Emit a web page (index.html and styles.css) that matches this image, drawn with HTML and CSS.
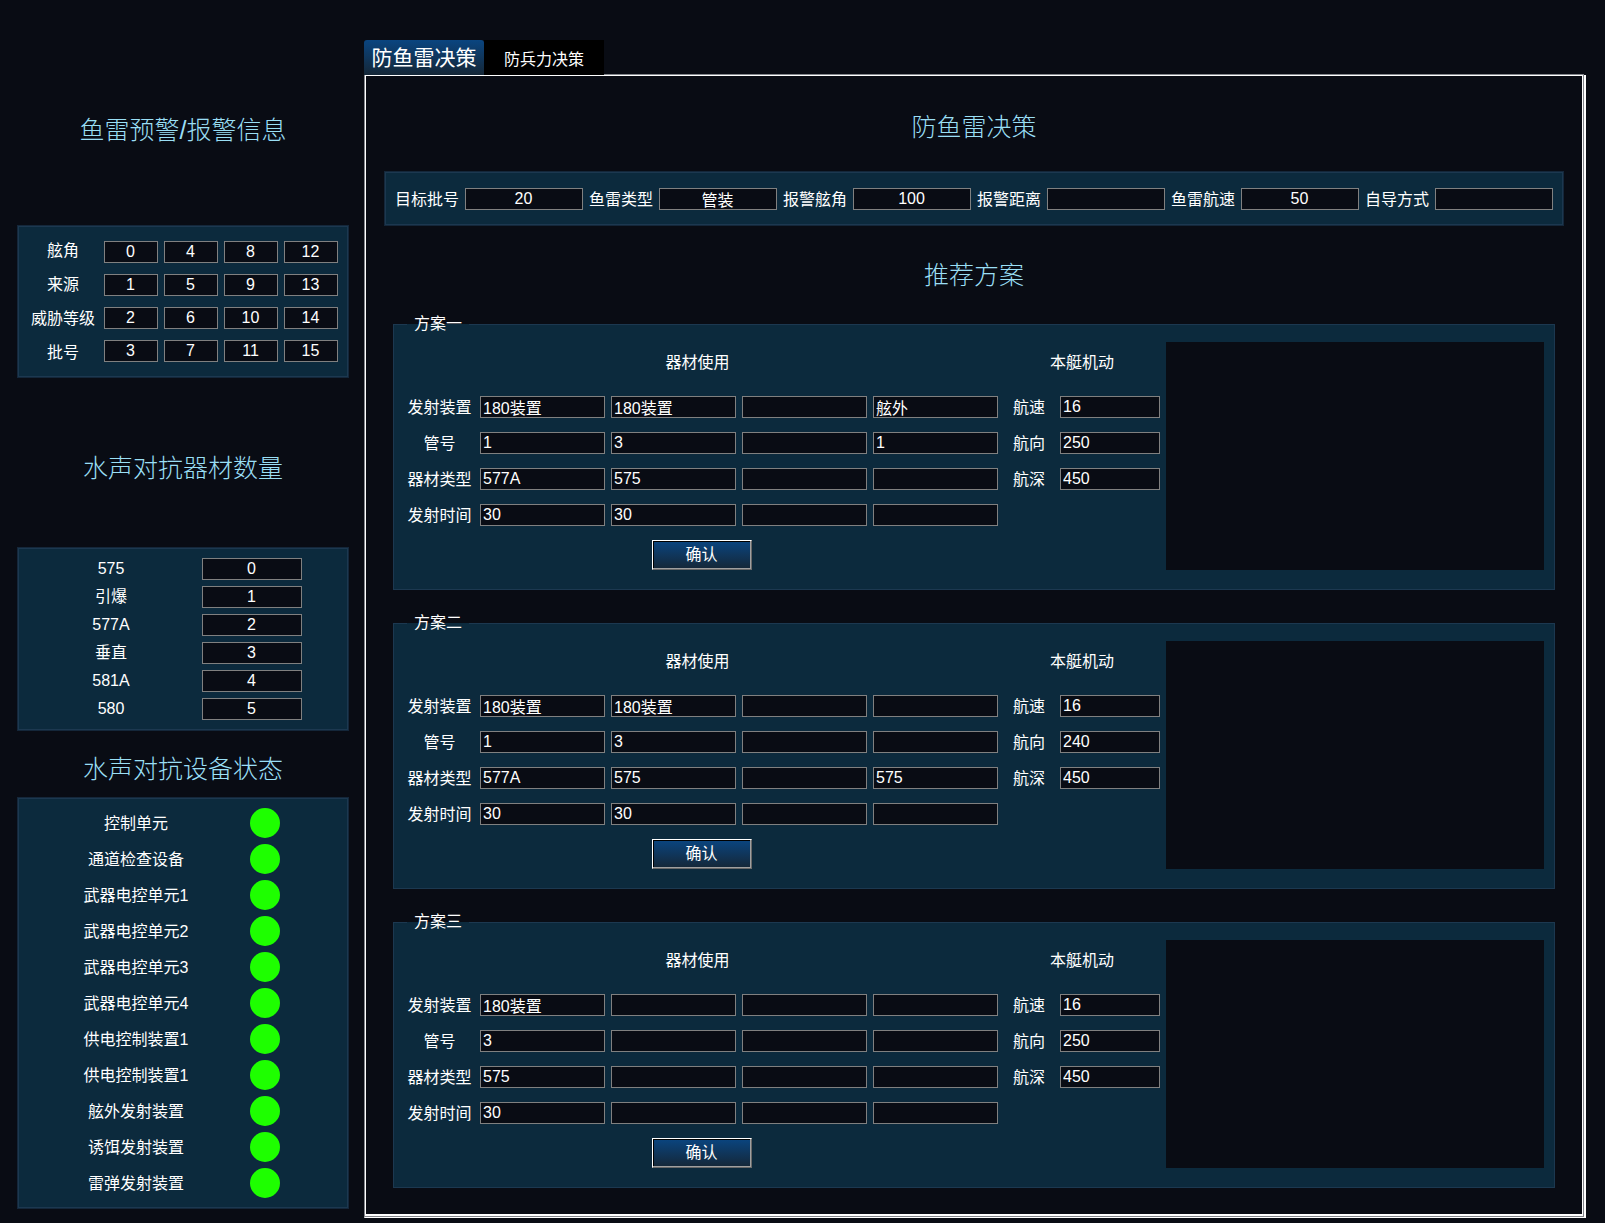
FILE: index.html
```html
<!DOCTYPE html>
<html lang="zh-CN">
<head>
<meta charset="utf-8">
<title>防鱼雷决策</title>
<link rel="stylesheet" href="styles.css">
</head>
<body>
<div class="app">
  <aside class="sidebar">
    <h2 class="title title-warning">鱼雷预警/报警信息</h2>
    <section class="panel warning">
      <div class="warning-labels">
        <label for="w0">舷角</label>
        <label for="w1">来源</label>
        <label for="w2">威胁等级</label>
        <label for="w3">批号</label>
      </div>
      <div class="warning-fields">
        <input id="w0" class="field center" value="0">
        <input id="w1" class="field center" value="1">
        <input id="w2" class="field center" value="2">
        <input id="w3" class="field center" value="3">
        <input class="field center" aria-label="舷角" value="4">
        <input class="field center" aria-label="来源" value="5">
        <input class="field center" aria-label="威胁等级" value="6">
        <input class="field center" aria-label="批号" value="7">
        <input class="field center" aria-label="舷角" value="8">
        <input class="field center" aria-label="来源" value="9">
        <input class="field center" aria-label="威胁等级" value="10">
        <input class="field center" aria-label="批号" value="11">
        <input class="field center" aria-label="舷角" value="12">
        <input class="field center" aria-label="来源" value="13">
        <input class="field center" aria-label="威胁等级" value="14">
        <input class="field center" aria-label="批号" value="15">
      </div>
    </section>

    <h2 class="title title-stock">水声对抗器材数量</h2>
    <section class="panel stock">
      <label for="s0">575</label><input id="s0" class="field center" value="0">
      <label for="s1">引爆</label><input id="s1" class="field center" value="1">
      <label for="s2">577A</label><input id="s2" class="field center" value="2">
      <label for="s3">垂直</label><input id="s3" class="field center" value="3">
      <label for="s4">581A</label><input id="s4" class="field center" value="4">
      <label for="s5">580</label><input id="s5" class="field center" value="5">
    </section>

    <h2 class="title title-status">水声对抗设备状态</h2>
    <ul class="panel status">
      <li><span class="device">控制单元</span><i class="lamp"></i></li>
      <li><span class="device">通道检查设备</span><i class="lamp"></i></li>
      <li><span class="device">武器电控单元1</span><i class="lamp"></i></li>
      <li><span class="device">武器电控单元2</span><i class="lamp"></i></li>
      <li><span class="device">武器电控单元3</span><i class="lamp"></i></li>
      <li><span class="device">武器电控单元4</span><i class="lamp"></i></li>
      <li><span class="device">供电控制装置1</span><i class="lamp"></i></li>
      <li><span class="device">供电控制装置1</span><i class="lamp"></i></li>
      <li><span class="device">舷外发射装置</span><i class="lamp"></i></li>
      <li><span class="device">诱饵发射装置</span><i class="lamp"></i></li>
      <li><span class="device">雷弹发射装置</span><i class="lamp"></i></li>
    </ul>
  </aside>

  <main class="main">
    <div class="tabs" role="tablist">
      <button class="tab active" role="tab" aria-selected="true">防鱼雷决策</button>
      <button class="tab" role="tab" aria-selected="false">防兵力决策</button>
    </div>
    <div class="pane" role="tabpanel">
      <div class="pane-body">
        <h1 class="title title-decision">防鱼雷决策</h1>
        <section class="panel target">
          <label for="t0">目标批号</label><input id="t0" class="field center" value="20">
          <label for="t1">鱼雷类型</label><input id="t1" class="field center" value="管装">
          <label for="t2">报警舷角</label><input id="t2" class="field center" value="100">
          <label for="t3">报警距离</label><input id="t3" class="field center" value="">
          <label for="t4">鱼雷航速</label><input id="t4" class="field center" value="50">
          <label for="t5">自导方式</label><input id="t5" class="field center" value="">
        </section>

        <h2 class="title title-plans">推荐方案</h2>
        <div class="plans">
          <fieldset class="plan">
            <legend>方案一</legend>
            <div class="plan-grid">
              <h3 class="equip-head">器材使用</h3>
              <h3 class="nav-head">本艇机动</h3>
              <div class="canvas"></div>
              <label for="a1">发射装置</label>
              <input id="a1" class="field" value="180装置">
              <input class="field" aria-label="发射装置" value="180装置">
              <input class="field" aria-label="发射装置" value="">
              <input class="field" aria-label="发射装置" value="舷外">
              <label for="a5">航速</label><input id="a5" class="field" value="16">
              <label for="a2">管号</label>
              <input id="a2" class="field" value="1">
              <input class="field" aria-label="管号" value="3">
              <input class="field" aria-label="管号" value="">
              <input class="field" aria-label="管号" value="1">
              <label for="a6">航向</label><input id="a6" class="field" value="250">
              <label for="a3">器材类型</label>
              <input id="a3" class="field" value="577A">
              <input class="field" aria-label="器材类型" value="575">
              <input class="field" aria-label="器材类型" value="">
              <input class="field" aria-label="器材类型" value="">
              <label for="a7">航深</label><input id="a7" class="field" value="450">
              <label for="a4">发射时间</label>
              <input id="a4" class="field" value="30">
              <input class="field" aria-label="发射时间" value="30">
              <input class="field" aria-label="发射时间" value="">
              <input class="field" aria-label="发射时间" value="">
              <button class="confirm" type="button">确认</button>
            </div>
          </fieldset>

          <fieldset class="plan">
            <legend>方案二</legend>
            <div class="plan-grid">
              <h3 class="equip-head">器材使用</h3>
              <h3 class="nav-head">本艇机动</h3>
              <div class="canvas"></div>
              <label for="b1">发射装置</label>
              <input id="b1" class="field" value="180装置">
              <input class="field" aria-label="发射装置" value="180装置">
              <input class="field" aria-label="发射装置" value="">
              <input class="field" aria-label="发射装置" value="">
              <label for="b5">航速</label><input id="b5" class="field" value="16">
              <label for="b2">管号</label>
              <input id="b2" class="field" value="1">
              <input class="field" aria-label="管号" value="3">
              <input class="field" aria-label="管号" value="">
              <input class="field" aria-label="管号" value="">
              <label for="b6">航向</label><input id="b6" class="field" value="240">
              <label for="b3">器材类型</label>
              <input id="b3" class="field" value="577A">
              <input class="field" aria-label="器材类型" value="575">
              <input class="field" aria-label="器材类型" value="">
              <input class="field" aria-label="器材类型" value="575">
              <label for="b7">航深</label><input id="b7" class="field" value="450">
              <label for="b4">发射时间</label>
              <input id="b4" class="field" value="30">
              <input class="field" aria-label="发射时间" value="30">
              <input class="field" aria-label="发射时间" value="">
              <input class="field" aria-label="发射时间" value="">
              <button class="confirm" type="button">确认</button>
            </div>
          </fieldset>

          <fieldset class="plan">
            <legend>方案三</legend>
            <div class="plan-grid">
              <h3 class="equip-head">器材使用</h3>
              <h3 class="nav-head">本艇机动</h3>
              <div class="canvas"></div>
              <label for="c1">发射装置</label>
              <input id="c1" class="field" value="180装置">
              <input class="field" aria-label="发射装置" value="">
              <input class="field" aria-label="发射装置" value="">
              <input class="field" aria-label="发射装置" value="">
              <label for="c5">航速</label><input id="c5" class="field" value="16">
              <label for="c2">管号</label>
              <input id="c2" class="field" value="3">
              <input class="field" aria-label="管号" value="">
              <input class="field" aria-label="管号" value="">
              <input class="field" aria-label="管号" value="">
              <label for="c6">航向</label><input id="c6" class="field" value="250">
              <label for="c3">器材类型</label>
              <input id="c3" class="field" value="575">
              <input class="field" aria-label="器材类型" value="">
              <input class="field" aria-label="器材类型" value="">
              <input class="field" aria-label="器材类型" value="">
              <label for="c7">航深</label><input id="c7" class="field" value="450">
              <label for="c4">发射时间</label>
              <input id="c4" class="field" value="30">
              <input class="field" aria-label="发射时间" value="">
              <input class="field" aria-label="发射时间" value="">
              <input class="field" aria-label="发射时间" value="">
              <button class="confirm" type="button">确认</button>
            </div>
          </fieldset>
        </div>
      </div>
    </div>
  </main>
</div>
</body>
</html>
```

FILE: styles.css
```css
:root {
  --bg: #090c14;
  --panel: #0c2a3d;
  --edge: #1c3850;
  --edge-dark: #14273a;
  --title: #9adff5;
}

* {
  box-sizing: border-box;
}

body {
  margin: 0;
  background: var(--bg);
  color: #fff;
  font: 16px/20px "Liberation Sans", "Noto Sans CJK SC", sans-serif;
}

button,
input {
  font: inherit;
  color: inherit;
}

.app {
  display: flex;
  gap: 15px;
  min-height: 100vh;
  padding: 23px 19px 5px 17px;
}

.sidebar {
  flex: 0 0 332px;
}

.title {
  display: flex;
  align-items: center;
  justify-content: center;
  margin: 0;
  padding-top: 10px;
  color: var(--title);
  font-size: 25px;
  font-weight: 300;
  line-height: 32px;
}

.title-warning { height: 202px; padding-top: 12px; }
.title-stock { height: 169px; }
.title-status { height: 66px; }
.title-decision { height: 95px; padding-top: 6px; }
.title-plans { height: 88px; }

.panel {
  margin: 0;
  border: 1px solid var(--edge-dark);
  box-shadow: inset 0 0 0 1px var(--edge);
  background: var(--panel);
}

.field {
  width: 100%;
  min-width: 0;
  height: 22px;
  margin: 0;
  padding: 0 2px;
  border: 1px solid #808080;
  border-radius: 0;
  outline: none;
  background: var(--bg);
  line-height: 20px;
}

.center {
  padding-right: 3px;
  text-align: center;
}

/* Warning grid */
.warning {
  display: flex;
  gap: 6px;
  padding: 8px 10px 7px;
}

.warning-labels {
  flex: 1;
  text-align: center;
  white-space: nowrap;
}

.warning-labels label {
  display: block;
  line-height: 34px;
}

.warning-fields {
  display: grid;
  grid-template-columns: repeat(4, 54px);
  grid-template-rows: repeat(4, 22px);
  grid-auto-flow: column;
  gap: 11px 6px;
  padding-top: 7px;
}

/* Countermeasure stock */
.stock {
  display: grid;
  grid-template-columns: 152px 100px;
  gap: 6px 15px;
  padding: 10px 17px;
}

.stock label {
  line-height: 22px;
  text-align: center;
}

/* Device status */
.status {
  display: grid;
  gap: 6px;
  padding: 10px 68px;
  list-style: none;
}

.status li {
  display: flex;
  align-items: center;
  justify-content: space-between;
}

.device {
  display: flex;
  flex: 0 0 100px;
  justify-content: center;
  min-width: 0;
  padding-top: 2px;
  white-space: nowrap;
}

.lamp {
  width: 30px;
  height: 30px;
  border-radius: 50%;
  background: #1eff00;
}

/* Tabs and pane */
.main {
  display: flex;
  flex: 1;
  flex-direction: column;
  min-width: 0;
  padding-top: 17px;
}

.tabs {
  display: flex;
}

.tabs::after {
  content: "";
  flex: 1;
  margin-right: 2px;
  border-bottom: 1px solid #83868b;
}

.tab {
  width: 120px;
  height: 35px;
  padding: 4px 0 0;
  border: 0;
  background: #000;
}

.tab.active {
  padding: 0;
  border-radius: 3px 3px 0 0;
  background: linear-gradient(#0a4580, #152737);
  font-size: 21px;
}

.pane {
  display: flex;
  flex: 1;
  padding: 0 1px 1px 0;
  border: 0 solid #fff;
  border-width: 0 2px 1px 1px;
  border-left-color: #83868b;
  background: #83868b;
}

.pane-body {
  flex: 1;
  min-width: 0;
  padding: 0 18px 26px;
  border: 1px solid #fff;
  border-bottom-width: 2px;
  background: var(--bg);
}

/* Target data bar */
.target {
  display: flex;
  align-items: center;
  gap: 6px;
  height: 55px;
  padding: 0 10px;
}

.target label {
  flex: none;
  padding-top: 2px;
}

.target .field {
  flex: 1;
}

/* Recommended plans */
.plans {
  display: grid;
  gap: 23px;
  padding: 0 9px;
}

.plan {
  min-width: 0;
  margin: 0;
  padding: 8px 10px 19px 11px;
  border: 1px solid var(--edge);
  background: var(--panel);
}

.plan legend {
  margin-left: 2px;
  padding: 0 7px;
}

.plan-grid {
  display: grid;
  grid-template-columns: 69px repeat(4, 125px) 50px 100px 1fr;
  grid-template-rows: 47px repeat(4, 36px) 37px;
  column-gap: 6px;
  align-items: center;
}

.plan-grid h3 {
  align-self: start;
  margin: 0;
  font-size: 16px;
  font-weight: 400;
  line-height: 42px;
  text-align: center;
}

.plan-grid label {
  padding-top: 2px;
  text-align: center;
}

.plan-grid .equip-head {
  grid-area: 1 / 1 / 2 / 6;
  padding-right: 8px;
}

.plan-grid .nav-head {
  grid-area: 1 / 6 / 2 / 8;
}

.canvas {
  grid-area: 1 / 8 / 7 / 9;
  align-self: stretch;
  background: var(--bg);
}

.confirm {
  grid-area: 6 / 1 / 7 / 6;
  align-self: end;
  justify-self: center;
  width: 100px;
  height: 30px;
  padding: 0;
  border: 1px solid;
  border-color: #fff #696969 #696969 #fff;
  box-shadow: inset -1px -1px 0 #a0a0a0, inset 1px 1px 0 #000;
  background: linear-gradient(#0a4580, #152737);
}
```
